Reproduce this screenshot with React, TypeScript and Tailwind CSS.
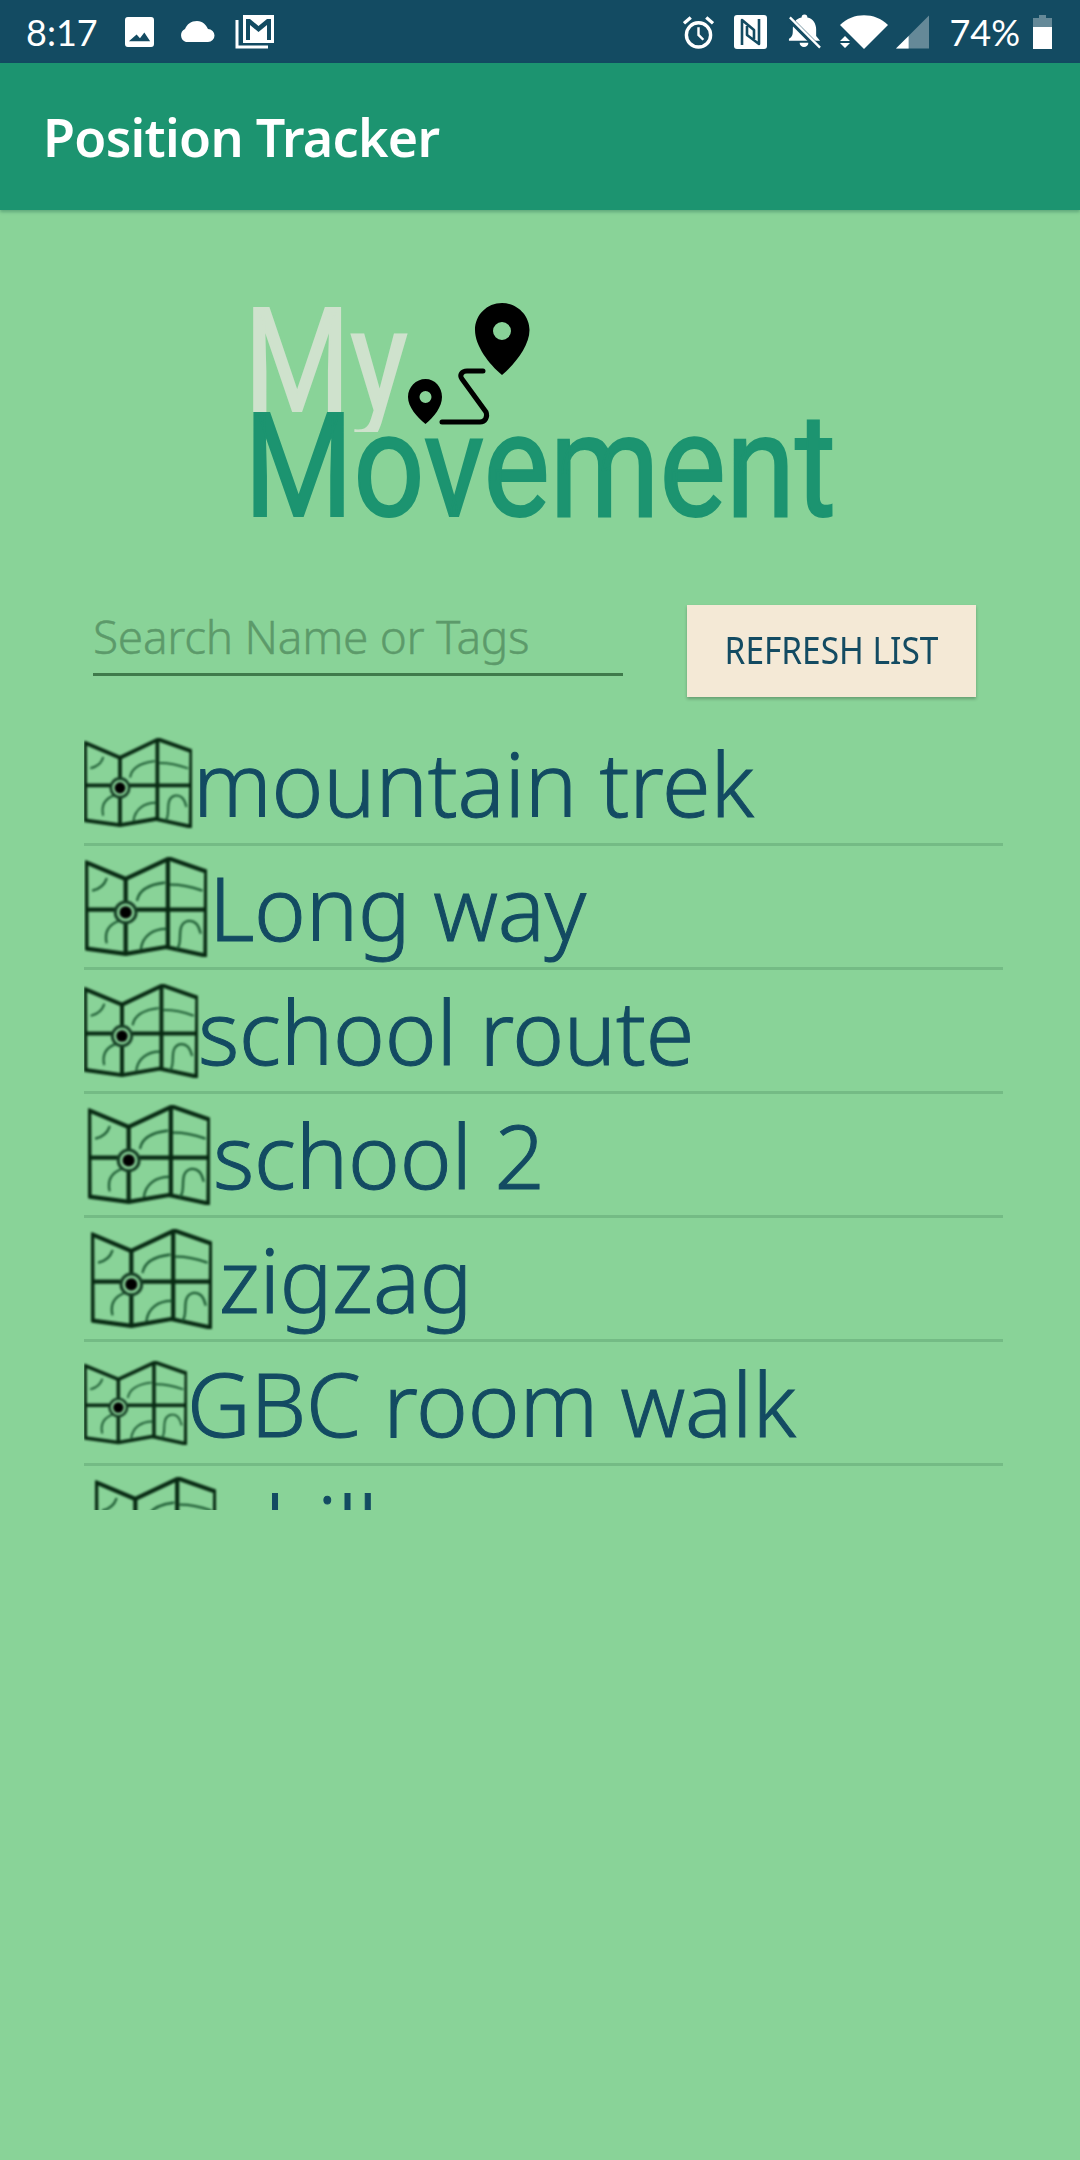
import React from "react";

function MapIcon({ w, h }: { w: number; h: number }) {
  return (
    <svg width={w} height={h} viewBox="44 28 318 260" preserveAspectRatio="none" fill="none" className="shrink-0 blur-[0.9px]">
      <g stroke="#082a13" strokeWidth="11" strokeLinejoin="round">
        <path d="M47 42L150 85L263 32L360 66L358 284L255 262L150 280L48 266Z" />
        <path d="M150 85V145M150 200V280M260 32V262" />
        <path d="M52 165H122M178 165H356" />
      </g>
      <g stroke="#1d5a33" strokeWidth="6" strokeLinecap="round">
        <path d="M65 115C85 110 95 100 100 85" />
        <path d="M180 140C185 115 210 100 250 95" />
        <path d="M268 100C290 100 320 105 348 115" />
        <path d="M100 250C95 225 105 205 130 195" />
        <path d="M190 265C195 235 220 215 255 215" />
        <path d="M285 265C300 250 280 205 310 195C330 190 340 205 345 225" />
      </g>
      <circle cx="150" cy="172" r="27" stroke="#163f25" strokeWidth="8" />
      <circle cx="150" cy="172" r="16" fill="#000" />
    </svg>
  );
}

const rows = [
  { name: "mountain trek", pad: 0, w: 108, h: 90, gap: 1 },
  { name: "Long way", pad: 1, w: 122, h: 100, gap: 2 },
  { name: "school route", pad: 0, w: 114, h: 94, gap: 0 },
  { name: "school 2", pad: 4, w: 122, h: 100, gap: 3 },
  { name: "zigzag", pad: 7, w: 121, h: 100, gap: 7 },
  { name: "GBC room walk", pad: 0, w: 103, h: 84, gap: 0 },
  { name: "chill", pad: 11, w: 121, h: 100, gap: 7 },
];

export default function App() {
  return (
    <div className="w-[1080px] h-[2160px] bg-[#89d398] overflow-hidden font-['Noto_Sans',sans-serif]">
      <div className="h-[63px] bg-[#134b62] flex items-center text-white">
        <span className="ml-[26px] text-[36px] font-['Lato',sans-serif] leading-none">8:17</span>
        <svg width="29" height="30" viewBox="0 0 30 31" className="ml-[27px]">
          <path fillRule="evenodd" fill="#fff" d="M3 0H27a3 3 0 0 1 3 3V28a3 3 0 0 1-3 3H3a3 3 0 0 1-3-3V3a3 3 0 0 1 3-3ZM4 25H26L20 16L15.500 22L12 18Z" />
        </svg>
        <svg width="36" height="21" viewBox="0 0 36 21" className="ml-[25px]">
          <path fill="#fff" d="M7 21A7 7 0 0 1 6 8 C8 3 12 0 18 0 C24 0 27 4 29 8 A6.500 6.500 0 0 1 29 21Z" />
        </svg>
        <svg width="40" height="34" viewBox="0 0 40 34" fill="none" className="ml-[20px]">
          <path d="M2 5V32H33" stroke="#fff" strokeWidth="3" />
          <path fillRule="evenodd" fill="#fff" d="M8 0H39V28H8ZM11 4V25H15V10L23.500 17L32 10V25H36V4H32L23.500 11L15 4Z" />
        </svg>
        <div className="ml-auto flex items-center">
          <svg width="31" height="34" viewBox="0 0 32 34" fill="none" stroke="#fff">
            <circle cx="16" cy="20" r="12.500" strokeWidth="3.500" />
            <path d="M16 12V20L21 25" strokeWidth="2.500" />
            <path d="M1 8L8 2M31 8L24 2" strokeWidth="3.500" />
          </svg>
          <svg width="33" height="34" viewBox="0 0 33 34" className="ml-[20px]">
            <rect width="33" height="34" rx="3" fill="#fff" />
            <path d="M8 30V5L20 15V24M25 4V29L13 20V11" fill="none" stroke="#134b62" strokeWidth="2.600" strokeLinejoin="round" />
          </svg>
          <svg width="34" height="36" viewBox="0 0 35 36" className="ml-[20px]">
            <path fill="#fff" d="M15 3a3 3 0 0 1 6 0C27 4 30 10 30 15V22L34 27H2V25C6 23 6 20 6 15C6 9 9 4 15 3ZM13 29H22A4.500 4.500 0 0 1 13 29Z" />
            <path d="M1 3L33 35" stroke="#134b62" strokeWidth="6" />
            <path d="M3 3L34 34" stroke="#fff" strokeWidth="2.500" />
          </svg>
          <svg width="48" height="34" viewBox="0 0 48 34" className="ml-[19px]">
            <path fill="#fff" d="M0 10C13 -3 35 -3 48 10L24 34Z" />
            <path fill="#134b62" d="M0 16L14 34H0Z" />
            <path fill="#fff" d="M5 21L10 26H0ZM0 28H10L5 33Z" />
          </svg>
          <svg width="33" height="34" viewBox="0 0 34 34" className="ml-[8px]">
            <path fill="#fff" fillOpacity="0.35" d="M34 0V34H0Z" />
            <path fill="#fff" d="M13 21V34H0Z" />
          </svg>
          <span className="ml-[20px] text-[36px] font-['Lato',sans-serif] leading-none">74%</span>
          <svg width="19" height="34" viewBox="0 0 19 34" className="ml-[13px] mr-[28px]">
            <path fill="#fff" fillOpacity="0.35" d="M6 0H13V3H19V12H0V3H6Z" />
            <path fill="#fff" d="M0 12H19V34H0Z" />
          </svg>
        </div>
      </div>

      <div className="h-[147px] bg-[#1c9470] flex items-center pl-[43px] shadow-[0_2px_3px_rgba(20,90,70,0.35)]">
        <span className="text-[52px] font-semibold text-white tracking-[-0.7px] leading-none">Position Tracker</span>
      </div>

      <div className="mt-[90px] flex justify-center">
        <svg width="586" height="220" viewBox="250 300 586 220" className="ml-[4px] overflow-visible">
          <defs>
            <clipPath id="mycut">
              <rect x="240" y="290" width="200" height="142" />
            </clipPath>
          </defs>
          <text x="245" y="411" fill="#cfe2cd" stroke="#cfe2cd" strokeWidth="2" clipPath="url(#mycut)" fontFamily="Roboto, sans-serif" fontSize="144" textLength="164" lengthAdjust="spacingAndGlyphs">My</text>
          <text x="245" y="516" fill="#1c9470" stroke="#1c9470" strokeWidth="2" fontFamily="Roboto, sans-serif" fontSize="144" textLength="592" lengthAdjust="spacingAndGlyphs">Movement</text>
          <path fillRule="evenodd" fill="#000" d="M503 303C488 303 476 315 476 330C476 346 490 364 503 375C516 364 530.500 346 530.500 330C530.500 315 518 303 503 303ZM503 322a9 9 0 1 1 0 18a9 9 0 0 1 0-18Z" />
          <path fillRule="evenodd" fill="#000" d="M426.500 379C417 379 409 387 409 397C409 407 418 417 426.500 424C435 417 443 407 443 397C443 387 436 379 426.500 379ZM426.500 391a6 6 0 1 1 0 12a6 6 0 0 1 0-12Z" />
          <path d="M484 371H468C463 371 460 375 463 379L487 412C489 417 486 422 481 422H443" fill="none" stroke="#000" strokeWidth="5" strokeLinecap="round" />
        </svg>
      </div>

      <div className="mt-[85px] flex items-start pl-[93px]">
        <div className="w-[530px] h-[71px] border-b-[3px] border-[#3f7a4b] text-[46px] leading-[62px] text-[#5c9a6a] font-light [-webkit-text-stroke:0.4px_#5c9a6a] tracking-[-0.3px] whitespace-nowrap">
          Search Name or Tags
        </div>
        <div className="ml-[64px] w-[289px] h-[92px] pb-[4px] bg-[#f4e9d6] shadow-[0_2px_3px_rgba(0,0,0,0.25)] flex items-center justify-center text-[#134b62] text-[38px]">
          <span className="inline-block scale-x-[0.88] whitespace-nowrap">REFRESH LIST</span>
        </div>
      </div>

      <div className="mt-[25px] ml-[84px] w-[919px] h-[788px] overflow-hidden text-[#134b62] text-[88px] font-light [-webkit-text-stroke:1px_#134b62] tracking-[-0.2px]">
        {rows.map((r) => (
          <div key={r.name} className="h-[124px] shrink-0 border-b-[3px] border-[#74bb85] flex items-center whitespace-nowrap leading-none">
            <div style={{ width: r.pad }} className="shrink-0" />
            <MapIcon w={r.w} h={r.h} />
            <div style={{ width: r.gap }} className="shrink-0" />
            <span>{r.name}</span>
          </div>
        ))}
      </div>
    </div>
  );
}
